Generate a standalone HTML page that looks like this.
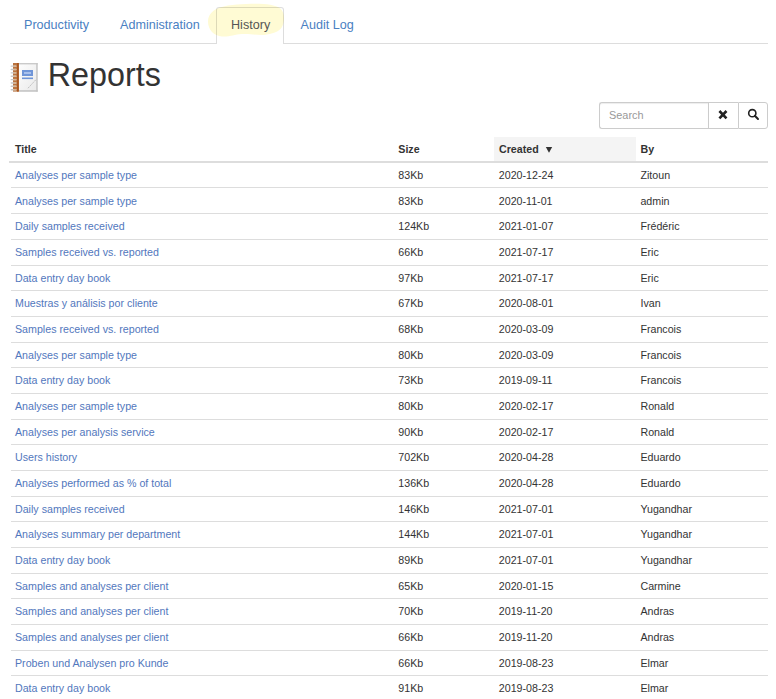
<!DOCTYPE html>
<html><head><meta charset="utf-8"><style>
html,body{margin:0;padding:0;background:#fff;width:776px;height:699px;overflow:hidden;position:relative}
body{font-family:"Liberation Sans",sans-serif}
.t{position:absolute;white-space:nowrap;line-height:1}
.ln{position:absolute;height:1px;background:#ddd}
</style></head><body>

<div class="ln" style="left:10px;top:43px;width:206px"></div>
<div class="ln" style="left:284px;top:43px;width:484px"></div>
<svg style="position:absolute;left:0;top:0" width="300" height="50"><path d="M246,3.9 C262,3.3 274,3.8 280.5,8.5 C285,12.5 284.8,22 282,27 C279,32 272,34 264,35 C256,35.5 250,33.5 242,34 C234,34.5 230,37 222,36.5 C214,36 208,30 208,21.6 C208,12 216,7.5 228,5.4 C234,4.5 240,4 246,3.9 Z" fill="#fffbd4"/></svg>
<div style="position:absolute;left:216px;top:7px;width:66px;height:36px;border:1px solid rgba(0,0,0,.133);border-bottom:0;border-radius:3px 3px 0 0;box-sizing:content-box"></div>
<div class="t" style="left:24px;top:19.334px;font-size:12.6px;color:#4a80c2;font-weight:normal;">Productivity</div>
<div class="t" style="left:120px;top:19.334px;font-size:12.6px;color:#4a80c2;font-weight:normal;">Administration</div>
<div class="t" style="left:231px;top:19.334px;font-size:12.6px;color:#555;font-weight:normal;">History</div>
<div class="t" style="left:300.6px;top:19.334px;font-size:12.6px;color:#4a80c2;font-weight:normal;">Audit Log</div>
<svg style="position:absolute;left:8px;top:61px" width="34" height="34" viewBox="0 0 34 34">
<defs><linearGradient id="pg" x1="0" y1="0" x2="1" y2="1"><stop offset="0" stop-color="#fdfdfd"/><stop offset="1" stop-color="#e9e9e9"/></linearGradient></defs>
<rect x="10.8" y="2" width="18.8" height="28.6" fill="url(#pg)"/>
<rect x="10.8" y="2" width="18.8" height="1.4" fill="#cacaca"/>
<rect x="28.2" y="2" width="1.5" height="28.6" fill="#c6c6c6"/>
<rect x="10.8" y="29.2" width="18.9" height="1.5" fill="#c2c2c2"/>
<rect x="5" y="2" width="5.8" height="28.6" fill="#b9733f"/>
<rect x="9" y="2" width="1.8" height="28.6" fill="#a9561f"/>
<rect x="2.6" y="4.40" width="6" height="1.4" rx="0.6" fill="#c9c9c9"/><rect x="5.6" y="4.40" width="2.6" height="1.4" fill="#d9b48e"/><rect x="2.6" y="7.77" width="6" height="1.4" rx="0.6" fill="#c9c9c9"/><rect x="5.6" y="7.77" width="2.6" height="1.4" fill="#d9b48e"/><rect x="2.6" y="11.14" width="6" height="1.4" rx="0.6" fill="#c9c9c9"/><rect x="5.6" y="11.14" width="2.6" height="1.4" fill="#d9b48e"/><rect x="2.6" y="14.51" width="6" height="1.4" rx="0.6" fill="#c9c9c9"/><rect x="5.6" y="14.51" width="2.6" height="1.4" fill="#d9b48e"/><rect x="2.6" y="17.88" width="6" height="1.4" rx="0.6" fill="#c9c9c9"/><rect x="5.6" y="17.88" width="2.6" height="1.4" fill="#d9b48e"/><rect x="2.6" y="21.25" width="6" height="1.4" rx="0.6" fill="#c9c9c9"/><rect x="5.6" y="21.25" width="2.6" height="1.4" fill="#d9b48e"/><rect x="2.6" y="24.62" width="6" height="1.4" rx="0.6" fill="#c9c9c9"/><rect x="5.6" y="24.62" width="2.6" height="1.4" fill="#d9b48e"/><rect x="2.6" y="27.99" width="6" height="1.4" rx="0.6" fill="#c9c9c9"/><rect x="5.6" y="27.99" width="2.6" height="1.4" fill="#d9b48e"/>
<rect x="14" y="9" width="11" height="6" fill="#6f95d8"/>
<rect x="16" y="11" width="7" height="2" fill="#a8c0ec"/>
<rect x="14" y="16.5" width="11" height="1.6" fill="#6f95d8"/>
<path d="M27.8,18.8 L20,27.2" stroke="#b8b8b8" stroke-width="1" stroke-dasharray="1.5 1"/>
</svg>
<div class="t" style="left:47.7px;top:59.158px;font-size:32.3px;color:#333;font-weight:normal;">Reports</div>
<div style="position:absolute;left:599px;top:102px;width:108px;height:25px;border:1px solid #ccc;border-right:0;border-radius:3px 0 0 3px;box-shadow:inset 0 1px 1px rgba(0,0,0,.075)"></div>
<div style="position:absolute;left:708px;top:102px;width:29px;height:25px;border:1px solid #ccc;border-right:0"></div>
<div style="position:absolute;left:738px;top:102px;width:28px;height:25px;border:1px solid #ccc;border-radius:0 3px 3px 0"></div>

<div class="t" style="left:609px;top:109.773px;font-size:10.9px;color:#999;font-weight:normal;">Search</div>
<svg style="position:absolute;left:716px;top:108px" width="14" height="14" viewBox="0 0 14 14"><path d="M3.4,3.0 L10.5,10.3 M10.5,3.0 L3.4,10.3" stroke="#222" stroke-width="2.6" stroke-linecap="butt"/></svg>
<svg style="position:absolute;left:745px;top:106px" width="16" height="16" viewBox="0 0 16 16"><circle cx="7.3" cy="7.2" r="3.6" fill="none" stroke="#222" stroke-width="1.6"/><path d="M9.8,9.8 L13,13" stroke="#222" stroke-width="2" stroke-linecap="round"/></svg>

<div style="position:absolute;left:494px;top:137px;width:142px;height:24px;background:#f4f4f4"></div>
<div style="position:absolute;left:9px;top:161px;width:759px;height:2px;background:#ddd"></div>
<div class="t" style="left:15px;top:143.968px;font-size:10.67px;color:#333;font-weight:bold;">Title</div>
<div class="t" style="left:398.3px;top:143.968px;font-size:10.67px;color:#333;font-weight:bold;">Size</div>
<div class="t" style="left:499px;top:143.968px;font-size:10.67px;color:#333;font-weight:bold;">Created</div>
<div class="t" style="left:640.45px;top:143.968px;font-size:10.67px;color:#333;font-weight:bold;">By</div>
<svg style="position:absolute;left:540px;top:140px" width="20" height="20"><path d="M5.8,7 L12.2,7 L9,12.7 Z" fill="#333"/></svg>
<div class="t" style="left:15px;top:169.968px;font-size:10.67px;color:#5277bd;font-weight:normal;">Analyses per sample type</div>
<div class="t" style="left:398.3px;top:169.968px;font-size:10.67px;color:#333;font-weight:normal;">83Kb</div>
<div class="t" style="left:498.8px;top:169.968px;font-size:10.67px;color:#333;font-weight:normal;">2020-12-24</div>
<div class="t" style="left:640.45px;top:169.968px;font-size:10.67px;color:#333;font-weight:normal;">Zitoun</div>
<div class="ln" style="left:11px;top:187px;width:757px"></div>
<div class="t" style="left:15px;top:195.968px;font-size:10.67px;color:#5277bd;font-weight:normal;">Analyses per sample type</div>
<div class="t" style="left:398.3px;top:195.968px;font-size:10.67px;color:#333;font-weight:normal;">83Kb</div>
<div class="t" style="left:498.8px;top:195.968px;font-size:10.67px;color:#333;font-weight:normal;">2020-11-01</div>
<div class="t" style="left:640.45px;top:195.968px;font-size:10.67px;color:#333;font-weight:normal;">admin</div>
<div class="ln" style="left:11px;top:213px;width:757px"></div>
<div class="t" style="left:15px;top:220.968px;font-size:10.67px;color:#5277bd;font-weight:normal;">Daily samples received</div>
<div class="t" style="left:398.3px;top:220.968px;font-size:10.67px;color:#333;font-weight:normal;">124Kb</div>
<div class="t" style="left:498.8px;top:220.968px;font-size:10.67px;color:#333;font-weight:normal;">2021-01-07</div>
<div class="t" style="left:640.45px;top:220.968px;font-size:10.67px;color:#333;font-weight:normal;">Frédéric</div>
<div class="ln" style="left:11px;top:239px;width:757px"></div>
<div class="t" style="left:15px;top:246.968px;font-size:10.67px;color:#5277bd;font-weight:normal;">Samples received vs. reported</div>
<div class="t" style="left:398.3px;top:246.968px;font-size:10.67px;color:#333;font-weight:normal;">66Kb</div>
<div class="t" style="left:498.8px;top:246.968px;font-size:10.67px;color:#333;font-weight:normal;">2021-07-17</div>
<div class="t" style="left:640.45px;top:246.968px;font-size:10.67px;color:#333;font-weight:normal;">Eric</div>
<div class="ln" style="left:11px;top:265px;width:757px"></div>
<div class="t" style="left:15px;top:272.968px;font-size:10.67px;color:#5277bd;font-weight:normal;">Data entry day book</div>
<div class="t" style="left:398.3px;top:272.968px;font-size:10.67px;color:#333;font-weight:normal;">97Kb</div>
<div class="t" style="left:498.8px;top:272.968px;font-size:10.67px;color:#333;font-weight:normal;">2021-07-17</div>
<div class="t" style="left:640.45px;top:272.968px;font-size:10.67px;color:#333;font-weight:normal;">Eric</div>
<div class="ln" style="left:11px;top:290px;width:757px"></div>
<div class="t" style="left:15px;top:297.968px;font-size:10.67px;color:#5277bd;font-weight:normal;">Muestras y análisis por cliente</div>
<div class="t" style="left:398.3px;top:297.968px;font-size:10.67px;color:#333;font-weight:normal;">67Kb</div>
<div class="t" style="left:498.8px;top:297.968px;font-size:10.67px;color:#333;font-weight:normal;">2020-08-01</div>
<div class="t" style="left:640.45px;top:297.968px;font-size:10.67px;color:#333;font-weight:normal;">Ivan</div>
<div class="ln" style="left:11px;top:316px;width:757px"></div>
<div class="t" style="left:15px;top:323.968px;font-size:10.67px;color:#5277bd;font-weight:normal;">Samples received vs. reported</div>
<div class="t" style="left:398.3px;top:323.968px;font-size:10.67px;color:#333;font-weight:normal;">68Kb</div>
<div class="t" style="left:498.8px;top:323.968px;font-size:10.67px;color:#333;font-weight:normal;">2020-03-09</div>
<div class="t" style="left:640.45px;top:323.968px;font-size:10.67px;color:#333;font-weight:normal;">Francois</div>
<div class="ln" style="left:11px;top:342px;width:757px"></div>
<div class="t" style="left:15px;top:349.968px;font-size:10.67px;color:#5277bd;font-weight:normal;">Analyses per sample type</div>
<div class="t" style="left:398.3px;top:349.968px;font-size:10.67px;color:#333;font-weight:normal;">80Kb</div>
<div class="t" style="left:498.8px;top:349.968px;font-size:10.67px;color:#333;font-weight:normal;">2020-03-09</div>
<div class="t" style="left:640.45px;top:349.968px;font-size:10.67px;color:#333;font-weight:normal;">Francois</div>
<div class="ln" style="left:11px;top:367px;width:757px"></div>
<div class="t" style="left:15px;top:374.968px;font-size:10.67px;color:#5277bd;font-weight:normal;">Data entry day book</div>
<div class="t" style="left:398.3px;top:374.968px;font-size:10.67px;color:#333;font-weight:normal;">73Kb</div>
<div class="t" style="left:498.8px;top:374.968px;font-size:10.67px;color:#333;font-weight:normal;">2019-09-11</div>
<div class="t" style="left:640.45px;top:374.968px;font-size:10.67px;color:#333;font-weight:normal;">Francois</div>
<div class="ln" style="left:11px;top:393px;width:757px"></div>
<div class="t" style="left:15px;top:400.968px;font-size:10.67px;color:#5277bd;font-weight:normal;">Analyses per sample type</div>
<div class="t" style="left:398.3px;top:400.968px;font-size:10.67px;color:#333;font-weight:normal;">80Kb</div>
<div class="t" style="left:498.8px;top:400.968px;font-size:10.67px;color:#333;font-weight:normal;">2020-02-17</div>
<div class="t" style="left:640.45px;top:400.968px;font-size:10.67px;color:#333;font-weight:normal;">Ronald</div>
<div class="ln" style="left:11px;top:419px;width:757px"></div>
<div class="t" style="left:15px;top:426.968px;font-size:10.67px;color:#5277bd;font-weight:normal;">Analyses per analysis service</div>
<div class="t" style="left:398.3px;top:426.968px;font-size:10.67px;color:#333;font-weight:normal;">90Kb</div>
<div class="t" style="left:498.8px;top:426.968px;font-size:10.67px;color:#333;font-weight:normal;">2020-02-17</div>
<div class="t" style="left:640.45px;top:426.968px;font-size:10.67px;color:#333;font-weight:normal;">Ronald</div>
<div class="ln" style="left:11px;top:444px;width:757px"></div>
<div class="t" style="left:15px;top:451.968px;font-size:10.67px;color:#5277bd;font-weight:normal;">Users history</div>
<div class="t" style="left:398.3px;top:451.968px;font-size:10.67px;color:#333;font-weight:normal;">702Kb</div>
<div class="t" style="left:498.8px;top:451.968px;font-size:10.67px;color:#333;font-weight:normal;">2020-04-28</div>
<div class="t" style="left:640.45px;top:451.968px;font-size:10.67px;color:#333;font-weight:normal;">Eduardo</div>
<div class="ln" style="left:11px;top:470px;width:757px"></div>
<div class="t" style="left:15px;top:477.968px;font-size:10.67px;color:#5277bd;font-weight:normal;">Analyses performed as % of total</div>
<div class="t" style="left:398.3px;top:477.968px;font-size:10.67px;color:#333;font-weight:normal;">136Kb</div>
<div class="t" style="left:498.8px;top:477.968px;font-size:10.67px;color:#333;font-weight:normal;">2020-04-28</div>
<div class="t" style="left:640.45px;top:477.968px;font-size:10.67px;color:#333;font-weight:normal;">Eduardo</div>
<div class="ln" style="left:11px;top:496px;width:757px"></div>
<div class="t" style="left:15px;top:503.968px;font-size:10.67px;color:#5277bd;font-weight:normal;">Daily samples received</div>
<div class="t" style="left:398.3px;top:503.968px;font-size:10.67px;color:#333;font-weight:normal;">146Kb</div>
<div class="t" style="left:498.8px;top:503.968px;font-size:10.67px;color:#333;font-weight:normal;">2021-07-01</div>
<div class="t" style="left:640.45px;top:503.968px;font-size:10.67px;color:#333;font-weight:normal;">Yugandhar</div>
<div class="ln" style="left:11px;top:521px;width:757px"></div>
<div class="t" style="left:15px;top:528.968px;font-size:10.67px;color:#5277bd;font-weight:normal;">Analyses summary per department</div>
<div class="t" style="left:398.3px;top:528.968px;font-size:10.67px;color:#333;font-weight:normal;">144Kb</div>
<div class="t" style="left:498.8px;top:528.968px;font-size:10.67px;color:#333;font-weight:normal;">2021-07-01</div>
<div class="t" style="left:640.45px;top:528.968px;font-size:10.67px;color:#333;font-weight:normal;">Yugandhar</div>
<div class="ln" style="left:11px;top:547px;width:757px"></div>
<div class="t" style="left:15px;top:554.968px;font-size:10.67px;color:#5277bd;font-weight:normal;">Data entry day book</div>
<div class="t" style="left:398.3px;top:554.968px;font-size:10.67px;color:#333;font-weight:normal;">89Kb</div>
<div class="t" style="left:498.8px;top:554.968px;font-size:10.67px;color:#333;font-weight:normal;">2021-07-01</div>
<div class="t" style="left:640.45px;top:554.968px;font-size:10.67px;color:#333;font-weight:normal;">Yugandhar</div>
<div class="ln" style="left:11px;top:573px;width:757px"></div>
<div class="t" style="left:15px;top:580.968px;font-size:10.67px;color:#5277bd;font-weight:normal;">Samples and analyses per client</div>
<div class="t" style="left:398.3px;top:580.968px;font-size:10.67px;color:#333;font-weight:normal;">65Kb</div>
<div class="t" style="left:498.8px;top:580.968px;font-size:10.67px;color:#333;font-weight:normal;">2020-01-15</div>
<div class="t" style="left:640.45px;top:580.968px;font-size:10.67px;color:#333;font-weight:normal;">Carmine</div>
<div class="ln" style="left:11px;top:598px;width:757px"></div>
<div class="t" style="left:15px;top:605.968px;font-size:10.67px;color:#5277bd;font-weight:normal;">Samples and analyses per client</div>
<div class="t" style="left:398.3px;top:605.968px;font-size:10.67px;color:#333;font-weight:normal;">70Kb</div>
<div class="t" style="left:498.8px;top:605.968px;font-size:10.67px;color:#333;font-weight:normal;">2019-11-20</div>
<div class="t" style="left:640.45px;top:605.968px;font-size:10.67px;color:#333;font-weight:normal;">Andras</div>
<div class="ln" style="left:11px;top:624px;width:757px"></div>
<div class="t" style="left:15px;top:631.968px;font-size:10.67px;color:#5277bd;font-weight:normal;">Samples and analyses per client</div>
<div class="t" style="left:398.3px;top:631.968px;font-size:10.67px;color:#333;font-weight:normal;">66Kb</div>
<div class="t" style="left:498.8px;top:631.968px;font-size:10.67px;color:#333;font-weight:normal;">2019-11-20</div>
<div class="t" style="left:640.45px;top:631.968px;font-size:10.67px;color:#333;font-weight:normal;">Andras</div>
<div class="ln" style="left:11px;top:650px;width:757px"></div>
<div class="t" style="left:15px;top:657.968px;font-size:10.67px;color:#5277bd;font-weight:normal;">Proben und Analysen pro Kunde</div>
<div class="t" style="left:398.3px;top:657.968px;font-size:10.67px;color:#333;font-weight:normal;">66Kb</div>
<div class="t" style="left:498.8px;top:657.968px;font-size:10.67px;color:#333;font-weight:normal;">2019-08-23</div>
<div class="t" style="left:640.45px;top:657.968px;font-size:10.67px;color:#333;font-weight:normal;">Elmar</div>
<div class="ln" style="left:11px;top:675px;width:757px"></div>
<div class="t" style="left:15px;top:682.968px;font-size:10.67px;color:#5277bd;font-weight:normal;">Data entry day book</div>
<div class="t" style="left:398.3px;top:682.968px;font-size:10.67px;color:#333;font-weight:normal;">91Kb</div>
<div class="t" style="left:498.8px;top:682.968px;font-size:10.67px;color:#333;font-weight:normal;">2019-08-23</div>
<div class="t" style="left:640.45px;top:682.968px;font-size:10.67px;color:#333;font-weight:normal;">Elmar</div>
<div class="ln" style="left:11px;top:701px;width:757px"></div>
</body></html>
